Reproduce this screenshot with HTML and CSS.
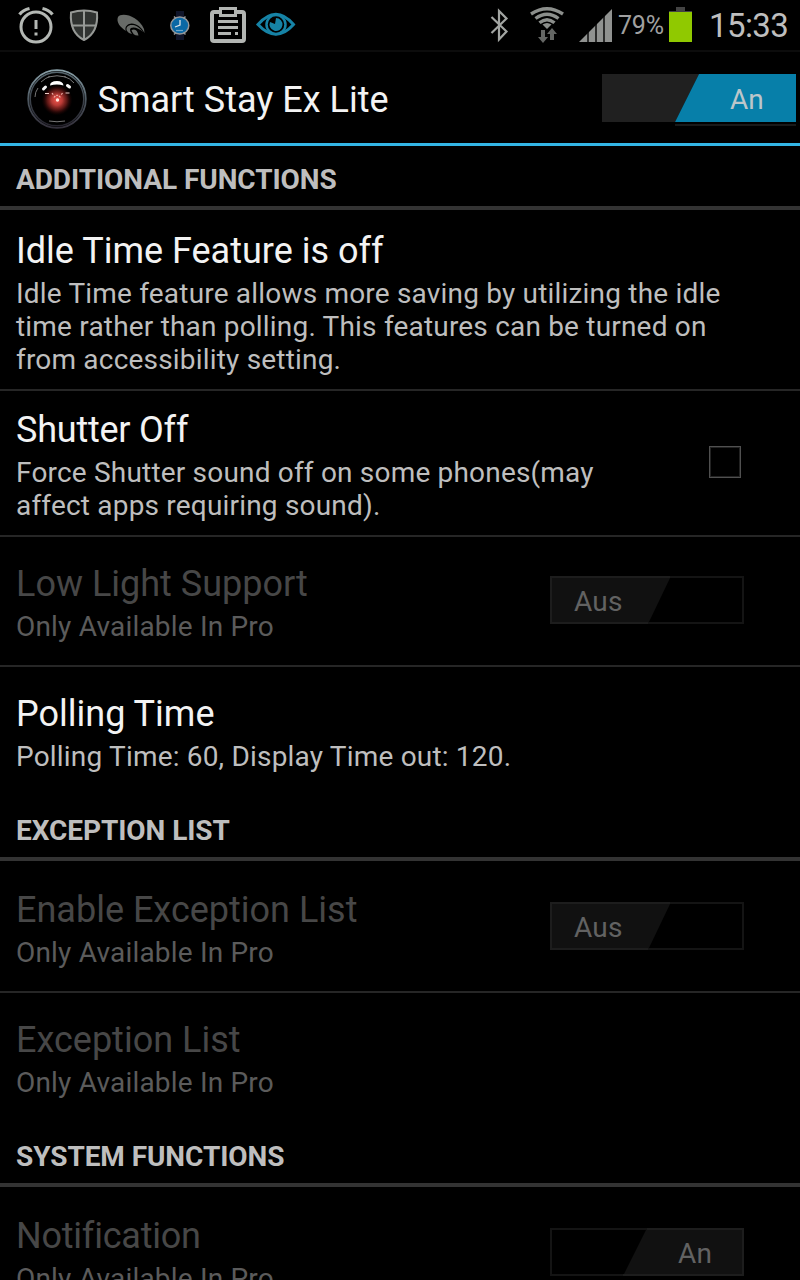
FILE: index.html
```html
<!DOCTYPE html>
<html lang="en">
<head>
<meta charset="utf-8">
<title>Smart Stay Ex Lite</title>
<link rel="stylesheet" href="styles.css">
</head>
<body>
<div class="screen">
  <header class="status">
    <svg class="status-icons" width="300" height="50" viewBox="0 0 300 50">
      <g fill="none" stroke="#b4b8b4" stroke-width="3">
        <circle cx="36" cy="27" r="15"/>
        <path d="M19.500 14.500Q23 10 29.500 8.500M42.500 8.500Q49 10 52.500 14.500" stroke-width="3.200"/>
      </g>
      <path d="M34.500 20h3v9h-3zM34.500 32.500h3v3h-3z" fill="#b4b8b4"/>
      <path d="M71 12.500Q84 8.500 97 12.500C98 25 94 35 84 40C74 35 70 25 71 12.500Z" fill="#303331" stroke="#969996" stroke-width="2"/>
      <path d="M84 11v28M72 25.500h24" stroke="#969996" stroke-width="2"/>
      <path d="M118 17C121 12 138 15 144 29L144.500 33C141 26 134 22 129 24C125 26 125 29 126 31C120 27 116 22 118 17Z" fill="#686b68"/>
      <path d="M127 31C124 25 135 21 143 32C138 27 130 26 130 30Q130 32 132 34Q129 34 127 31Z" fill="#686b68"/>
      <path d="M131.500 30Q137 27.500 138.500 35.500Q133 36 131.500 30Z" fill="#686b68"/>
      <path d="M176 11h8v6h-8zM176 33h8v7h-8z" fill="#10152a"/>
      <ellipse cx="179.800" cy="25.500" rx="9" ry="8.500" fill="#0a68a5" stroke="#94979a" stroke-width="1.500"/>
      <path d="M174 16.500l2 2M185.500 16.500l-2 2M174 34.500l2-2M185.500 34.500l-2-2" stroke="#94979a" stroke-width="1.500"/>
      <path d="M180 20v5l-5 2" fill="none" stroke="#dce4e8" stroke-width="1.300"/>
      <path d="M176 30.500h7" stroke="#6fa7c8" stroke-width="1.200"/>
      <rect x="212" y="12" width="32" height="29" rx="2" fill="#000" stroke="#b2b5b2" stroke-width="4"/>
      <path d="M220.500 8.500h15v7h-15z" fill="#000" stroke="#b2b5b2" stroke-width="3"/>
      <path d="M218 21.500h20M218 27.500h20M218 33.500h13M235 33.500h3" stroke="#b2b5b2" stroke-width="3"/>
      <path d="M258 24.500Q276 4 293.500 24.500Q276 44 258 24.500Z" fill="#000" stroke="#1683a6" stroke-width="3"/>
      <circle cx="276" cy="24.500" r="9.500" fill="#000" stroke="#1683a6" stroke-width="2.500"/>
      <path d="M276 18a6.500 6.500 0 1 1-6 4l5 2z" fill="#1683a6"/>
    </svg>
    <svg class="status-icons" width="130" height="50" viewBox="484 0 130 50">
      <path d="M491.500 17L506.500 31.500L499 39.500V11L506.500 18.500L491.500 33" fill="none" stroke="#a2a5a2" stroke-width="2.200"/>
      <g fill="none" stroke="#8c8f8c" stroke-width="3.400">
        <path d="M531 14Q547 3.500 563 14"/>
        <path d="M535.500 18.500Q547 10 558.500 18.500"/>
        <path d="M539.500 22.800Q547 16.500 554.500 22.800"/>
      </g>
      <path d="M542.500 24.500Q547 21.500 551.500 24.500L547 29Z" fill="#8c8f8c"/>
      <path d="M541 30h4v7h3l-5 6l-5-6h3zM550 40v-6h-3l5-6l5 6h-3v6z" fill="#646664"/>
      <path d="M579 42L612 9V42Z" fill="#909290"/>
      <path d="M588 20v22M596 20v22M604 12v30" stroke="#000" stroke-width="1.400"/>
    </svg>
    <span class="percent">79%</span>
    <svg class="battery" width="23" height="36" viewBox="0 0 23 36"><path d="M7 0h9v4h7v2H0V4h7z" fill="#444"/><path d="M0 5h23v30H0z" fill="#90c900"/></svg>
    <span class="clock">15:33</span>
  </header>

  <div class="actionbar">
    <svg class="logo" width="62" height="62" viewBox="0 0 62 62">
      <defs>
        <radialGradient id="glow"><stop offset="0" stop-color="#f0564e"/><stop offset=".35" stop-color="#b83a35"/><stop offset=".65" stop-color="#6d1b18" stop-opacity=".8"/><stop offset="1" stop-color="#200" stop-opacity="0"/></radialGradient>
        <linearGradient id="rim" x2="0" y2="1"><stop offset="0" stop-color="#8ba2aa"/><stop offset=".5" stop-color="#4e5962"/><stop offset="1" stop-color="#34303b"/></linearGradient>
        <linearGradient id="inner" x2="0" y2="1"><stop offset="0" stop-color="#56666e"/><stop offset="1" stop-color="#25232c"/></linearGradient>
      </defs>
      <circle cx="31" cy="31" r="28.800" fill="#000" stroke="url(#rim)" stroke-width="1.800"/>
      <circle cx="31" cy="31" r="26.800" fill="none" stroke="url(#inner)" stroke-width="1.500"/>
      <circle cx="31" cy="32" r="15.500" fill="url(#glow)"/>
      <path d="M15 14Q20 9.500 24 8.500M38 8.500Q44 10 48 15M9 29Q9 24 12 20" fill="none" stroke="#777" stroke-width="1"/>
      <path d="M22 9Q31 6.500 40 9M23 53Q31 54.500 39 53" fill="none" stroke="#777"/>
      <path d="M24 17.500Q24 13 31 13Q37 13 37.500 17.500Q31 15.500 24 17.500Z" fill="#fff"/>
      <path d="M17.500 21l2-2M41.500 17.500l2 1.500" stroke="#f4f4f4" stroke-width="3" stroke-linecap="round"/>
      <path d="M19 25.500h4M39.500 25h4" stroke="#f0d0cc" stroke-width="1.200"/>
      <path d="M26 25l1.500 2M36.500 25l-1.500 2M28 29.500Q31 25 34.500 29.500" fill="none" stroke="#f0b0a8" stroke-width="1.200" stroke-dasharray="2 1"/>
      <circle cx="31.500" cy="32" r="1.700" fill="#ffe8e0"/>
    </svg>
    <h1 class="app-title">Smart Stay Ex Lite</h1>
    <div class="master">
      <svg width="195" height="52" viewBox="0 0 195 52"><path d="M0 0h97L73 48H0z" fill="#202020"/><path d="M97 0h97v48H73z" fill="#077fa9"/><path d="M73 50h121v2H73z" fill="#191919"/></svg>
      <span class="master-label">An</span>
    </div>
  </div>

  <h2 class="section">ADDITIONAL FUNCTIONS</h2>
  <div class="row idle">
    <div><div class="title">Idle Time Feature is off</div>
    <div class="summary">Idle Time feature allows more saving by utilizing the idle<br>time rather than polling. This features can be turned on<br>from accessibility setting.</div></div>
  </div>
  <div class="row shutter">
    <div><div class="title snug">Shutter Off</div>
    <div class="summary">Force Shutter sound off on some phones(may<br>affect apps requiring sound).</div></div>
    <span class="checkbox"></span>
  </div>
  <div class="row disabled">
    <div><div class="title">Low Light Support</div><div class="summary">Only Available In Pro</div></div>
    <div class="toggle off">
      <svg width="194" height="48" viewBox="0 0 194 48"><path d="M0 0h121L98 48H0z" fill="#111"/><path d="M1 1h192v46H1z" fill="none" stroke="#141414" stroke-width="2"/><path d="M120 1H1v46h97" fill="none" stroke="#1d1d1d" stroke-width="2"/></svg>
      <span class="toggle-label">Aus</span>
    </div>
  </div>
  <div class="row last">
    <div><div class="title">Polling Time</div><div class="summary">Polling Time: 60, Display Time out: 120.</div></div>
  </div>

  <h2 class="section">EXCEPTION LIST</h2>
  <div class="row disabled first">
    <div><div class="title">Enable Exception List</div><div class="summary">Only Available In Pro</div></div>
    <div class="toggle off">
      <svg width="194" height="48" viewBox="0 0 194 48"><path d="M0 0h121L98 48H0z" fill="#111"/><path d="M1 1h192v46H1z" fill="none" stroke="#141414" stroke-width="2"/><path d="M120 1H1v46h97" fill="none" stroke="#1d1d1d" stroke-width="2"/></svg>
      <span class="toggle-label">Aus</span>
    </div>
  </div>
  <div class="row disabled last">
    <div><div class="title">Exception List</div><div class="summary">Only Available In Pro</div></div>
  </div>

  <h2 class="section">SYSTEM FUNCTIONS</h2>
  <div class="row disabled first last">
    <div><div class="title snug">Notification</div><div class="summary">Only Available In Pro</div></div>
    <div class="toggle on">
      <svg width="194" height="48" viewBox="0 0 194 48"><path d="M97 0h97v48H73z" fill="#111"/><path d="M1 1h192v46H1z" fill="none" stroke="#141414" stroke-width="2"/><path d="M97 1h96v46H73" fill="none" stroke="#1d1d1d" stroke-width="2"/></svg>
      <span class="toggle-label">An</span>
    </div>
  </div>
</div>
</body>
</html>
```
FILE: styles.css
```css
* { box-sizing: border-box; }
body { margin: 0; background: #000; }
.screen {
  width: 800px; height: 1280px; overflow: hidden;
  display: flex; flex-direction: column;
  background: #000; color: #bebebe;
  font-family: Roboto, "Liberation Sans", sans-serif;
  font-variant-ligatures: none;
}
.screen > * { flex-shrink: 0; }
svg { display: block; }
.status { height: 52px; border-bottom: 2px solid #0c0c0c; display: flex; align-items: flex-start; }
.status-icons + .status-icons { margin-left: 184px; }
.percent { margin-left: 4px; width: 51px; padding-top: 11px; font-size: 25px; line-height: 30px; letter-spacing: -.2px; color: #a0a0a0; white-space: nowrap; }
.battery { margin-top: 7px; }
.clock { margin-left: 17px; padding-top: 6px; font-size: 33px; line-height: 40px; letter-spacing: -.6px; color: #bebebe; white-space: nowrap; }
.actionbar { height: 94px; border-bottom: 3px solid #33b5e5; display: flex; align-items: flex-start; }
.logo { margin: 16px 0 0 26px; }
.app-title { margin: 27px 0 0 9.500px; flex: 1; font-size: 36px; font-weight: 400; line-height: 43px; color: #f3f3f3; white-space: nowrap; }
.master { width: 195px; margin: 22px 3px 0 0; display: grid; }
.master > *, .toggle > * { grid-area: 1 / 1; }
.master-label { padding: 9px 0 0 128px; font-size: 28px; line-height: 33px; color: #bcc6ca; }
.section { margin: 0; height: 64px; padding: 17px 16px 0; border-bottom: 4px solid #333; font-size: 28px; font-weight: 700; line-height: 34px; letter-spacing: -.07px; white-space: nowrap; }
.row { height: 130px; padding: 26px 56px 0 16px; border-bottom: 2px solid #262626; display: flex; justify-content: space-between; white-space: nowrap; }
.first { height: 132px; padding-top: 28px; }
.last { border-bottom: 0; }
.idle { height: 181px; padding-top: 20px; }
.shutter { height: 146px; padding-top: 18px; }
.title { font-size: 36px; line-height: 43px; color: #f3f3f3; }
.snug { letter-spacing: -.22px; }
.summary { margin-top: 4px; font-size: 28px; line-height: 33px; letter-spacing: .19px; }
.disabled .title { color: #474747; }
.disabled .summary { color: #5b5b5b; }
.checkbox { width: 32px; height: 32px; margin: 37px 3px 0 0; border: 1px solid #505050; box-shadow: inset 0 0 0 1px #222; }
.toggle { width: 194px; display: grid; align-content: start; margin-top: 13px; font-size: 28px; line-height: 33px; letter-spacing: .2px; color: #626262; }
.toggle-label { padding: 9px 0 0 24px; }
.on .toggle-label { padding-left: 128px; }
```
